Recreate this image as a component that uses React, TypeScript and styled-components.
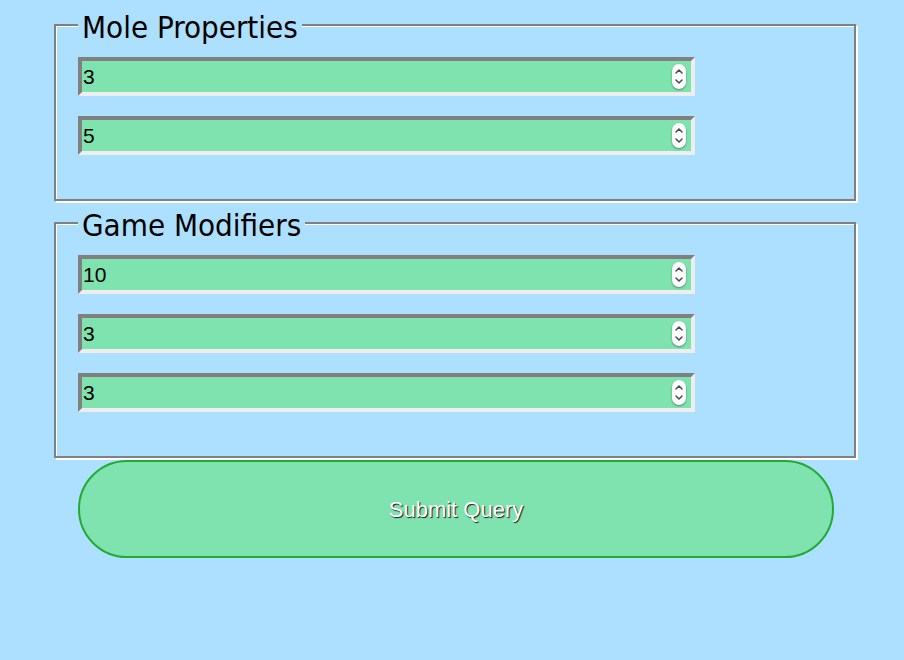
import React from "react";
import styled, { createGlobalStyle } from "styled-components";

const BG = "#ade0fe";
const GREEN = "#7ee3ae";

const GlobalStyle = createGlobalStyle`
  html, body {
    margin: 0;
    padding: 0;
    background: ${BG};
  }
  body {
    width: 904px;
    height: 660px;
    overflow: hidden;
  }
`;

const Page = styled.form`
  display: flex;
  flex-direction: column;
  align-items: flex-start;
  padding: 5px 0 0 54px;
`;

const Group = styled.fieldset<{ $first?: boolean }>`
  box-sizing: border-box;
  width: 802px;
  min-inline-size: auto;
  margin: ${(p) => (p.$first ? "0" : "2px")} 0 0;
  padding: 12px 0 44px 22px;
  border: 2px solid #808080;
  box-shadow: inset 1px 1px 0 #ffffff, 2px 2px 0 #ffffff;
`;

const Legend = styled.legend`
  padding: 4px 4px 0;
  font-family: "DejaVu Sans Condensed", "DejaVu Sans", sans-serif;
  font-size: 31px;
  line-height: 36px;
  color: #000;
  background: ${BG};
`;

const Field = styled.div`
  box-sizing: border-box;
  display: flex;
  align-items: center;
  width: 617px;
  height: 39px;
  margin-bottom: 20px;
  padding: 0 5px 0 1px;
  border-width: 4px;
  border-style: solid;
  border-color: #808080 #eeeeee #eeeeee #808080;
  background: ${GREEN};
  &:last-of-type {
    margin-bottom: 0;
  }
`;

const NumberInput = styled.input`
  flex: 1;
  min-width: 0;
  border: none;
  outline: none;
  background: transparent;
  padding: 0;
  margin: 0;
  font-family: "Liberation Sans", Arial, sans-serif;
  font-size: 21px;
  color: #000;
  appearance: textfield;
  -moz-appearance: textfield;
  &::-webkit-inner-spin-button,
  &::-webkit-outer-spin-button {
    -webkit-appearance: none;
    margin: 0;
  }
`;

const Spinner = styled.span`
  display: flex;
  flex-direction: column;
  align-items: center;
  justify-content: center;
  gap: 5px;
  width: 14px;
  height: 25px;
  border-radius: 7px;
  background: #ffffff;
  box-shadow: 0 1px 2px rgba(0, 0, 0, 0.4);
`;

const SubmitButton = styled.button`
  box-sizing: border-box;
  width: 756px;
  height: 98px;
  margin: 2px 0 0 24px;
  border: 2px solid #22aa33;
  border-radius: 49px;
  background: ${GREEN};
  color: #ffffff;
  font-family: "Liberation Sans", Arial, sans-serif;
  font-size: 22px;
  padding-top: 2px;
  text-shadow: 1px 1px 1px #1a1a1a;
  cursor: pointer;
`;

const Chevron = ({ up }: { up?: boolean }) => (
  <svg width="8" height="5" viewBox="0 0 8 5" aria-hidden="true">
    <path
      d={up ? "M1 4 L4 1 L7 4" : "M1 1 L4 4 L7 1"}
      fill="none"
      stroke="#4a4a4a"
      strokeWidth="1.5"
      strokeLinecap="round"
      strokeLinejoin="round"
    />
  </svg>
);

const NumberField = ({ value }: { value: number }) => (
  <Field>
    <NumberInput type="number" defaultValue={value} />
    <Spinner>
      <Chevron up />
      <Chevron />
    </Spinner>
  </Field>
);

export default function App() {
  return (
    <>
      <GlobalStyle />
      <Page onSubmit={(e) => e.preventDefault()}>
        <Group $first>
          <Legend>Mole Properties</Legend>
          <NumberField value={3} />
          <NumberField value={5} />
        </Group>
        <Group>
          <Legend>Game Modifiers</Legend>
          <NumberField value={10} />
          <NumberField value={3} />
          <NumberField value={3} />
        </Group>
        <SubmitButton type="submit">Submit Query</SubmitButton>
      </Page>
    </>
  );
}
